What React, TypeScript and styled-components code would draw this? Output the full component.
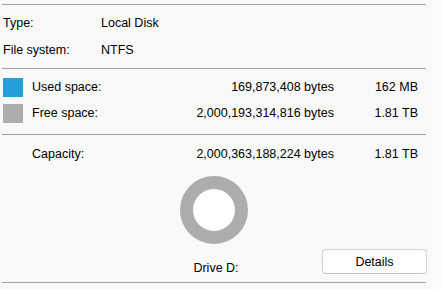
import React from "react"
import styled, { createGlobalStyle } from "styled-components"

const GlobalStyle = createGlobalStyle`
    html, body {
        margin: 0;
        padding: 0;
        background: #f9f9f9;
    }
    body {
        font-family: "Liberation Sans", Arial, sans-serif;
        font-size: 12.5px;
        color: #000;
    }
`

type UsageItem = {
    label: string
    bytes: string
    size: string
    color?: string
}

const usage: Array<UsageItem> = [
    { label: "Used space:", bytes: "169,873,408 bytes", size: "162 MB", color: "#26a0da" },
    { label: "Free space:", bytes: "2,000,193,314,816 bytes", size: "1.81 TB", color: "#adadad" },
]

const App: React.FunctionComponent = () => {
    return (
        <>
            <GlobalStyle />
            <Page>
                <Panel>
                    <Divider />
                    <InfoSection>
                        <InfoRow>
                            <InfoLabel>Type:</InfoLabel>
                            <span>Local Disk</span>
                        </InfoRow>
                        <InfoRow>
                            <InfoLabel>File system:</InfoLabel>
                            <span>NTFS</span>
                        </InfoRow>
                    </InfoSection>
                    <Divider />
                    <UsageSection>
                        {usage.map(item => (
                            <UsageRow key={item.label}>
                                <Swatch $color={item.color} />
                                <span>{item.label}</span>
                                <Number>{item.bytes}</Number>
                                <Number>{item.size}</Number>
                            </UsageRow>
                        ))}
                    </UsageSection>
                    <Divider />
                    <CapacitySection>
                        <UsageRow>
                            <Swatch />
                            <span>Capacity:</span>
                            <Number>2,000,363,188,224 bytes</Number>
                            <Number>1.81 TB</Number>
                        </UsageRow>
                    </CapacitySection>
                    <Donut />
                    <Footer>
                        <DriveName>Drive D:</DriveName>
                        <DetailsButton>Details</DetailsButton>
                    </Footer>
                    <Divider />
                </Panel>
                <Strip />
            </Page>
        </>
    )
}

export default App

const Page = styled.div`
    display: flex;
    flex-direction: row;
    height: 289px;
    overflow: hidden;
`
const Panel = styled.div`
    width: 424px;
    padding: 4px 7px 0 2px;
    display: flex;
    flex-direction: column;
`
const Strip = styled.div`
    flex: 1;
    background: #fcfcfc;
`
const Divider = styled.div`
    height: 1px;
    background: #a0a0a0;
    flex-shrink: 0;
`
const InfoSection = styled.div`
    padding: 5px 0 4px 1px;
`
const InfoRow = styled.div`
    display: grid;
    grid-template-columns: 98px 1fr;
    height: 27px;
    line-height: 27px;
`
const InfoLabel = styled.span`
    white-space: nowrap;
`
const UsageSection = styled.div`
    padding: 5px 0 8px 0;
`
const CapacitySection = styled.div`
    padding: 6px 0 0 0;
`
const UsageRow = styled.div`
    display: grid;
    grid-template-columns: 30px 1fr auto 84px;
    align-items: center;
    height: 26px;
    padding-right: 8px;
`
const Swatch = styled.div<{ $color?: string }>`
    width: 20px;
    height: 19px;
    margin-left: 1px;
    background: ${({ $color }) => $color ?? "transparent"};
`
const Number = styled.span`
    text-align: right;
    white-space: nowrap;
`
const Donut = styled.div`
    align-self: center;
    width: 42px;
    height: 42px;
    margin-top: 9px;
    border: 13px solid #adadad;
    border-radius: 50%;
    background: #fff;
`
const Footer = styled.div`
    display: grid;
    grid-template-columns: 1fr auto 1fr;
    height: 38px;
`
const DriveName = styled.span`
    grid-column: 2;
    margin-top: 16px;
    line-height: 16px;
    padding-left: 4px;
`
const DetailsButton = styled.button`
    grid-column: 3;
    justify-self: end;
    align-self: start;
    margin-top: 5px;
    margin-right: -1px;
    width: 105px;
    height: 25px;
    background: #fdfdfd;
    border: 1px solid #d3d3d3;
    border-bottom-color: #c4c4c4;
    border-radius: 4px;
    font-family: "Liberation Sans", Arial, sans-serif;
    font-size: 12.5px;
    color: #000;
    padding: 0;
`
